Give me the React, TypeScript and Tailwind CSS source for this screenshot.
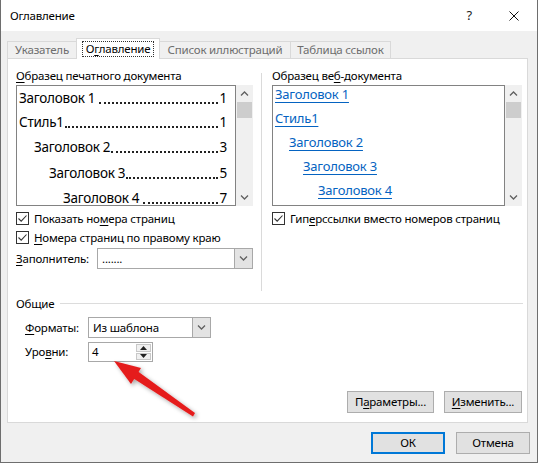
import React from 'react';

// underlined access key letter
function K({ children }: { children: React.ReactNode }) {
  return <span className="underline decoration-1 underline-offset-[2px]">{children}</span>;
}

function Chevron({ up = false }: { up?: boolean }) {
  return (
    <svg viewBox="0 0 9 5" className="h-[5px] w-[9px]">
      <path
        d={up ? 'M1 4.5 L4.5 1 L8 4.5' : 'M1 0.5 L4.5 4 L8 0.5'}
        fill="none"
        stroke="#606060"
        strokeWidth="1.3"
      />
    </svg>
  );
}

function ScrollBar() {
  return (
    <div className="flex h-[121px] w-[17px] flex-col bg-[#f0f0f0]">
      <div className="flex h-[17px] items-center justify-center">
        <Chevron up />
      </div>
      <div className="mx-[1px] h-[16px] bg-[#cdcdcd]" />
      <div className="flex-1" />
      <div className="flex h-[17px] items-center justify-center">
        <Chevron />
      </div>
    </div>
  );
}

function Check({ children }: { children: React.ReactNode }) {
  return (
    <div className="flex h-[17px] items-center">
      <span className="flex h-[13px] w-[13px] items-center justify-center border border-[#333333] bg-white">
        <svg viewBox="0 0 11 11" className="h-[11px] w-[11px]">
          <path d="M1.5 5.5 L4.2 8.2 L9.5 2.5" fill="none" stroke="#333333" strokeWidth="1.1" />
        </svg>
      </span>
      <span className="ml-[5px] whitespace-nowrap">{children}</span>
    </div>
  );
}

function Combo({ className, text }: { className: string; text: string }) {
  return (
    <div className={`flex h-[21px] border border-[#a8a8a8] bg-white ${className}`}>
      <span className="flex-1 whitespace-nowrap pl-[4px] leading-[19px]">{text}</span>
      <span className="flex w-[18px] items-center justify-center border-l border-[#a8a8a8] bg-[#e3e3e3]">
        <Chevron />
      </span>
    </div>
  );
}

const printRows = [
  { label: 'Заголовок 1', page: '1', indent: 'pl-[2px]', h: 'h-[24px]', gap: 'ml-[4px]' },
  { label: 'Стиль1', page: '1', indent: 'pl-[2px]', h: 'h-[24px]', gap: 'ml-[1px]' },
  { label: 'Заголовок 2', page: '3', indent: 'pl-[17px]', h: 'h-[27px]', gap: 'ml-[1px]' },
  { label: 'Заголовок 3', page: '5', indent: 'pl-[32px]', h: 'h-[24px]', gap: 'ml-[1px]' },
  { label: 'Заголовок 4', page: '7', indent: 'pl-[46px]', h: 'h-[27px]', gap: 'ml-[4px]' },
];

const webRows = [
  { label: 'Заголовок 1', indent: 'pl-[2px]' },
  { label: 'Стиль1', indent: 'pl-[2px]' },
  { label: 'Заголовок 2', indent: 'pl-[16px]' },
  { label: 'Заголовок 3', indent: 'pl-[30px]' },
  { label: 'Заголовок 4', indent: 'pl-[45px]' },
];

function Btn({ className, children }: { className: string; children: React.ReactNode }) {
  return (
    <div className={`flex h-[22px] items-center justify-center border border-[#adadad] bg-[#e1e1e1] ${className}`}>
      {children}
    </div>
  );
}

export default function App() {
  return (
    <div className="relative flex h-[463px] w-[538px] flex-col overflow-hidden border-x border-b border-[#6e6e6e] bg-[#f0f0f0] font-['Noto_Sans','Open_Sans',sans-serif] text-[11.5px] tracking-[-0.2px] text-black">
      {/* Title bar */}
      <div className="flex h-[31px] items-center bg-white pl-[9px]">
        <span className="flex-1">Оглавление</span>
        <span className="mr-[37px] text-[13px] text-[#222]">?</span>
        <svg viewBox="0 0 10 10" className="mr-[18px] h-[10px] w-[10px]">
          <path d="M0.5 0.5 L9.5 9.5 M9.5 0.5 L0.5 9.5" stroke="#111" strokeWidth="1" />
        </svg>
      </div>

      {/* Tabs */}
      <div className="flex h-[27px] items-end pl-[6px]">
        <div className="flex h-[17px] w-[69px] items-center justify-center border-l border-t border-[#d9d9d9] text-[#6d6d6d]">
          Указатель
        </div>
        <div className="relative z-10 -mb-[1px] flex h-[21px] w-[84px] items-center justify-center border-x border-t border-[#d9d9d9] bg-white">
          <span className="border border-dotted border-[#333] px-[3px] leading-[14px]">
            О<K>г</K>лавление
          </span>
        </div>
        <div className="flex h-[17px] w-[131px] items-center justify-center border-t border-r border-[#d9d9d9] text-[#6d6d6d]">
          Список иллюстраций
        </div>
        <div className="flex h-[17px] w-[100px] items-center justify-center border-t border-r border-[#d9d9d9] text-[#6d6d6d]">
          Таблица ссылок
        </div>
      </div>

      {/* Tab panel */}
      <div className="ml-[6px] flex h-[365px] w-[521px] flex-col border border-[#d9d9d9] bg-white">
        <div className="flex h-[236px] pl-[8px] pt-[8px]">
          {/* Print preview */}
          <div className="flex w-[245px] flex-col">
            <div className="h-[18px] leading-[17px]">
              <K>О</K>бразец печатного документа
            </div>
            <div className="flex">
              <div className="h-[121px] w-[220px] overflow-hidden border border-[#828282] pr-[8px] text-[13.5px] tracking-[-0.25px]">
                {printRows.map((r) => (
                  <div key={r.label} className={`flex items-center ${r.h} ${r.indent}`}>
                    <span className="whitespace-nowrap">{r.label}</span>
                    <span className={`mt-[9px] h-[2px] flex-1 border-b-2 border-dotted border-[#222] ${r.gap} mr-[2px]`} />
                    <span>{r.page}</span>
                  </div>
                ))}
              </div>
              <ScrollBar />
            </div>
            <div className="mt-[4px]">
              <Check>
                Показать но<K>м</K>ера страниц
              </Check>
            </div>
            <div className="mt-[2px]">
              <Check>
                <K>Н</K>омера страниц по правому краю
              </Check>
            </div>
            <div className="mt-[2px] flex items-center">
              <span className="w-[81px]">
                <K>З</K>аполнитель:
              </span>
              <Combo className="w-[156px]" text="......." />
            </div>
          </div>

          <div className="mt-[6px] h-[218px] w-px bg-[#dadada]" />

          {/* Web preview */}
          <div className="ml-[10px] flex w-[250px] flex-col">
            <div className="h-[18px] leading-[17px]">
              Образец ве<K>б</K>-документа
            </div>
            <div className="flex">
              <div className="h-[121px] w-[233px] overflow-hidden border border-[#828282] text-[13px] tracking-[-0.2px] text-[#0563c1]">
                <div className="-mt-[3px]">
                  {webRows.map((r) => (
                    <div key={r.label} className={`flex h-[24px] items-center ${r.indent}`}>
                      <span className="underline decoration-1 underline-offset-[3px]">{r.label}</span>
                    </div>
                  ))}
                </div>
              </div>
              <ScrollBar />
            </div>
            <div className="mt-[4px]">
              <Check>
                Гип<K>е</K>рссылки вместо номеров страниц
              </Check>
            </div>
          </div>
        </div>

        {/* General */}
        <div className="flex h-[17px] items-center pl-[8px] pr-[4px]">
          <span>Общие</span>
          <div className="ml-[6px] h-px flex-1 bg-[#dcdcdc]" />
        </div>
        <div className="mt-[5px] flex items-center pl-[17px]">
          <span className="w-[63px]">
            <K>Ф</K>орматы:
          </span>
          <Combo className="w-[123px]" text="Из шаблона" />
        </div>
        <div className="mt-[4px] flex items-center pl-[17px]">
          <span className="w-[63px]">
            Уро<K>в</K>ни:
          </span>
          <div className="flex h-[20px] w-[65px] border border-[#a8a8a8] bg-white">
            <span className="flex-1 pl-[3px] leading-[18px]">4</span>
            <div className="my-[1px] mr-[1px] flex w-[15px] flex-col gap-px">
              <div className="flex flex-1 items-center justify-center border border-[#c8c8c8] bg-[#f0f0f0]">
                <svg viewBox="0 0 7 4" className="h-[4px] w-[7px]">
                  <path d="M0 4 L3.5 0 L7 4 Z" fill="#222" />
                </svg>
              </div>
              <div className="flex flex-1 items-center justify-center border border-[#c8c8c8] bg-[#f0f0f0]">
                <svg viewBox="0 0 7 4" className="h-[4px] w-[7px]">
                  <path d="M0 0 L3.5 4 L7 0 Z" fill="#222" />
                </svg>
              </div>
            </div>
          </div>
        </div>
        <div className="mt-[29px] flex justify-end gap-[10px] pr-[5px]">
          <Btn className="w-[87px]">
            П<K>а</K>раметры...
          </Btn>
          <Btn className="w-[78px]">
            <K>И</K>зменить...
          </Btn>
        </div>
      </div>

      {/* Footer */}
      <div className="mt-[9px] flex justify-end gap-[11px] pr-[7px]">
        <div className="flex h-[22px] w-[74px] items-center justify-center border-2 border-[#0078d7] bg-[#e1e1e1]">
          ОК
        </div>
        <Btn className="w-[74px]">Отмена</Btn>
      </div>

      {/* Red annotation arrow */}
      <svg className="pointer-events-none absolute left-0 top-0" width="538" height="463" viewBox="0 0 538 463">
        <defs>
          <filter id="sh" x="-20%" y="-20%" width="140%" height="140%">
            <feDropShadow dx="2" dy="2" stdDeviation="2" floodColor="#000" floodOpacity="0.35" />
          </filter>
        </defs>
        <g filter="url(#sh)" fill="#e51c1c">
          <polygon points="113,361 130,384 140,368" />
          <polygon points="132.5,378.5 137,371.5 194,413 192,416.5" />
        </g>
      </svg>
    </div>
  );
}
